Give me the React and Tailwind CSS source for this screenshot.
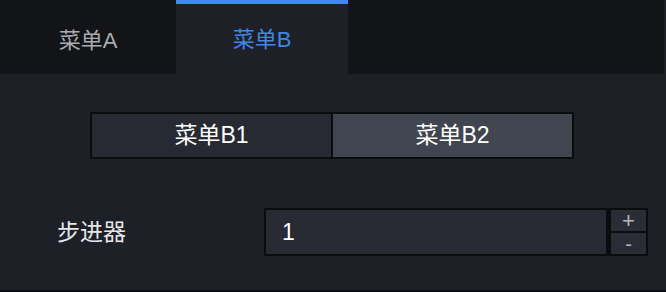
import { useState } from 'react';

const FONT = { fontFamily: '"Liberation Sans", "Noto Sans CJK SC", sans-serif' };

export default function App() {
    const [tab, setTab] = useState('B');
    const [seg, setSeg] = useState('B2');
    const [value, setValue] = useState(1);

    return (
        <div className="w-[666px] h-[292px] bg-[#1e2028] border-b-2 border-[#0b0c0e] flex flex-col" style={FONT}>
            {/* tab bar */}
            <div className="h-[74px] w-[664px] flex bg-[#121417] shrink-0">
                <div
                    onClick={() => setTab('A')}
                    className={`w-[176px] flex items-center justify-center text-[22px] cursor-pointer ${tab === 'A' ? 'bg-[#1e2028] border-t-4 border-[#3d8af7] text-[#3f86ea]' : 'pt-[6px] text-[#a9abaf]'}`}
                >
                    菜单A
                </div>
                <div
                    onClick={() => setTab('B')}
                    className={`w-[172px] flex items-center justify-center text-[22px] cursor-pointer ${tab === 'B' ? 'bg-[#1e2028] border-t-4 border-[#3d8af7] text-[#3f86ea]' : 'pt-[6px] text-[#a9abaf]'}`}
                >
                    菜单B
                </div>
            </div>

            {/* segmented control */}
            <div className="mt-[38px] ml-[90px] w-[484px] h-[47px] flex border-2 border-[#0b0c0e]">
                <div
                    onClick={() => setSeg('B1')}
                    className={`flex-1 flex items-center justify-center text-[23px] text-white border-r-2 border-[#0b0c0e] cursor-pointer ${seg === 'B1' ? 'bg-[#41454f]' : 'bg-[#272a33]'}`}
                >
                    菜单B1
                </div>
                <div
                    onClick={() => setSeg('B2')}
                    className={`flex-1 flex items-center justify-center text-[23px] text-white cursor-pointer ${seg === 'B2' ? 'bg-[#41454f]' : 'bg-[#272a33]'}`}
                >
                    菜单B2
                </div>
            </div>

            {/* stepper */}
            <div className="mt-[49px] flex items-center">
                <div className="w-[264px] pl-[57px] text-[23px] text-[#e6e7e9]">步进器</div>
                <div className="w-[344px] h-[48px] border-2 border-[#0b0c0e] bg-[#272a33] flex items-center pl-[16px] text-[23px] text-white">
                    {value}
                </div>
                <div className="w-[40px] h-[48px] flex flex-col border-2 border-l-[3px] border-[#0b0c0e] bg-[#0b0c0e] gap-[2px]">
                    <button
                        onClick={() => setValue(value + 1)}
                        className="h-[21px] bg-[#2a2d35] flex items-center justify-center text-[#b5b7bb] text-[22px] leading-[20px]"
                    >
                        +
                    </button>
                    <button
                        onClick={() => setValue(value - 1)}
                        className="h-[21px] bg-[#2a2d35] flex items-center justify-center text-[#b5b7bb] text-[20px] leading-[20px]"
                    >
                        -
                    </button>
                </div>
            </div>
        </div>
    );
}
